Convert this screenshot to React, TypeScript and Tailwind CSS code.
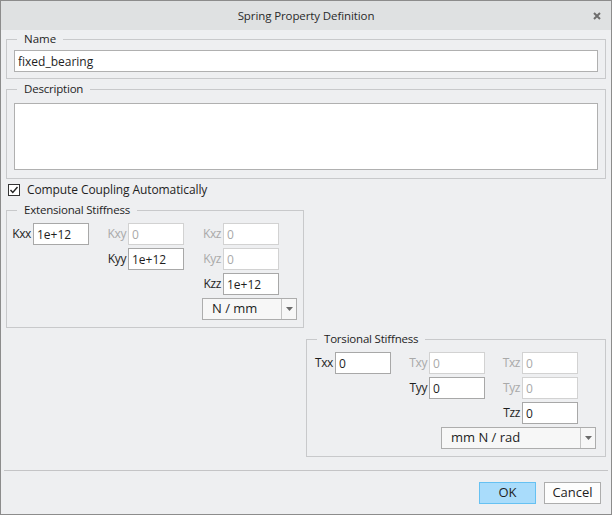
import React from "react";

const FONT = { fontFamily: '"Open Sans", "Noto Sans", sans-serif' };

type Cell = { label: string; value: string; on: boolean } | null;

function Field({ label, value, on }: { label: string; value: string; on: boolean }) {
  return (
    <div className="flex items-center justify-end gap-[2px]">
      <span className={"tracking-[-0.4px] " + (on ? "text-[#1e1e1e]" : "text-[#a9a9a9]")}>{label}</span>
      <input
        readOnly
        value={value}
        className={
          "h-[22px] w-[56px] bg-white px-[3px] outline-none " +
          (on ? "border border-[#a8a8a8] text-[#1e1e1e]" : "border border-[#d2d2d2] text-[#a9a9a9]")
        }
      />
    </div>
  );
}

function Dropdown({ text, className }: { text: string; className: string }) {
  return (
    <div className={"flex h-[22px] border border-[#adadad] bg-[#f7f7f7] " + className}>
      <div className="flex flex-1 items-center pl-[9px] text-[13px] text-[#1e1e1e]">{text}</div>
      <div className="flex w-[15px] items-center justify-center border-l border-[#c4c4c4]">
        <svg width="7" height="4" viewBox="0 0 7 4">
          <path d="M0 0h7L3.5 4z" fill="#6b6b6b" />
        </svg>
      </div>
    </div>
  );
}

function Group({
  title,
  cells,
  cols,
  width,
  dropdown,
}: {
  title: string;
  cells: Cell[];
  cols: string;
  width: string;
  dropdown: React.ReactNode;
}) {
  return (
    <fieldset className={"border border-[#c8c9cb] pl-[7px] pb-[7px] pt-[5px] " + width}>
      <legend className="ml-[3px] px-[7px] text-[11.5px] leading-[16px] tracking-[-0.2px] text-[#1e1e1e]">{title}</legend>
      <div className={"grid gap-y-[3px] " + cols}>
        {cells.map((c, i) => (c ? <Field key={i} {...c} /> : <div key={i} />))}
        {dropdown}
      </div>
    </fieldset>
  );
}

export default function App() {
  const ext: Cell[] = [
    { label: "Kxx", value: "1e+12", on: true },
    { label: "Kxy", value: "0", on: false },
    { label: "Kxz", value: "0", on: false },
    null,
    { label: "Kyy", value: "1e+12", on: true },
    { label: "Kyz", value: "0", on: false },
    null,
    null,
    { label: "Kzz", value: "1e+12", on: true },
  ];
  const tor: Cell[] = [
    { label: "Txx", value: "0", on: true },
    { label: "Txy", value: "0", on: false },
    { label: "Txz", value: "0", on: false },
    null,
    { label: "Tyy", value: "0", on: true },
    { label: "Tyz", value: "0", on: false },
    null,
    null,
    { label: "Tzz", value: "0", on: true },
  ];

  return (
    <div
      className="flex h-[515px] w-[612px] flex-col border border-[#8c8c8c] bg-[#eeeff1] text-[12px] text-[#1e1e1e]"
      style={FONT}
    >
      {/* Title bar */}
      <div className="grid h-[29px] shrink-0 grid-cols-[1fr_auto_1fr] items-center bg-[#dfe1e2]">
        <div />
        <div className="text-[11.5px] tracking-[-0.1px] text-[#2a2a2a]">Spring Property Definition</div>
        <div className="flex justify-end pr-[10px]">
          <svg width="8" height="8" viewBox="0 0 8 8">
            <path d="M1 1l6 6M7 1L1 7" stroke="#6d6d6d" strokeWidth="2" />
          </svg>
        </div>
      </div>

      <div className="flex flex-col px-[5px] pt-[1px]">
        {/* Name */}
        <fieldset className="border border-[#c8c9cb] px-[7px] pb-[6px] pt-[3px]">
          <legend className="ml-[3px] px-[7px] text-[11.5px] leading-[16px]">Name</legend>
          <input
            readOnly
            value="fixed_bearing"
            className="h-[22px] w-full border border-[#b0b0b0] bg-white px-[3px] outline-none"
          />
        </fieldset>

        {/* Description */}
        <fieldset className="mt-[2px] border border-[#c8c9cb] px-[7px] pb-[8px] pt-[6px]">
          <legend className="ml-[3px] px-[7px] text-[11.5px] leading-[16px] tracking-[-0.2px]">Description</legend>
          <textarea readOnly className="block h-[67px] w-full resize-none border border-[#b0b0b0] bg-white outline-none" />
        </fieldset>

        {/* Checkbox */}
        <div className="flex h-[21px] items-center gap-[7px] pl-[2px]">
          <div className="flex h-[12px] w-[12px] items-center justify-center border border-[#333] bg-white">
            <svg width="10" height="10" viewBox="0 0 10 10">
              <path d="M1.5 5l2.3 2.5L8.5 2" stroke="#222" strokeWidth="1.4" fill="none" />
            </svg>
          </div>
          <span className="tracking-[-0.1px]">Compute Coupling Automatically</span>
        </div>

        {/* Extensional */}
        <div className="mt-[2px] flex">
          <Group
            title="Extensional Stiffness"
            width="w-[298px]"
            cols="grid-cols-[75px_95px_95px]"
            cells={ext}
            dropdown={
              <>
                <div />
                <div />
                <Dropdown text="N / mm" className="ml-[18px] w-[95px]" />
              </>
            }
          />
        </div>

        {/* Torsional */}
        <div className="mt-[3px] flex justify-end">
          <Group
            title="Torsional Stiffness"
            width="w-[300px]"
            cols="grid-cols-[77px_94px_93px]"
            cells={tor}
            dropdown={
              <>
                <div />
                <Dropdown text="mm N / rad" className="col-span-2 ml-[50px] w-[155px]" />
              </>
            }
          />
        </div>
      </div>

      {/* Separator */}
      <div className="mx-[3px] mt-[13px] h-px bg-[#c4c4c6]" />

      {/* Buttons */}
      <div className="mt-[11px] flex justify-end gap-[8px] pr-[10px]">
        <button className="h-[22px] w-[57px] border border-[#66c1f2] bg-[#a9dcfb] text-[13px] text-[#1e1e1e]">
          OK
        </button>
        <button className="h-[22px] w-[57px] border border-[#adadad] bg-[#fdfdfd] text-[13px] text-[#1e1e1e]">
          Cancel
        </button>
      </div>
    </div>
  );
}
